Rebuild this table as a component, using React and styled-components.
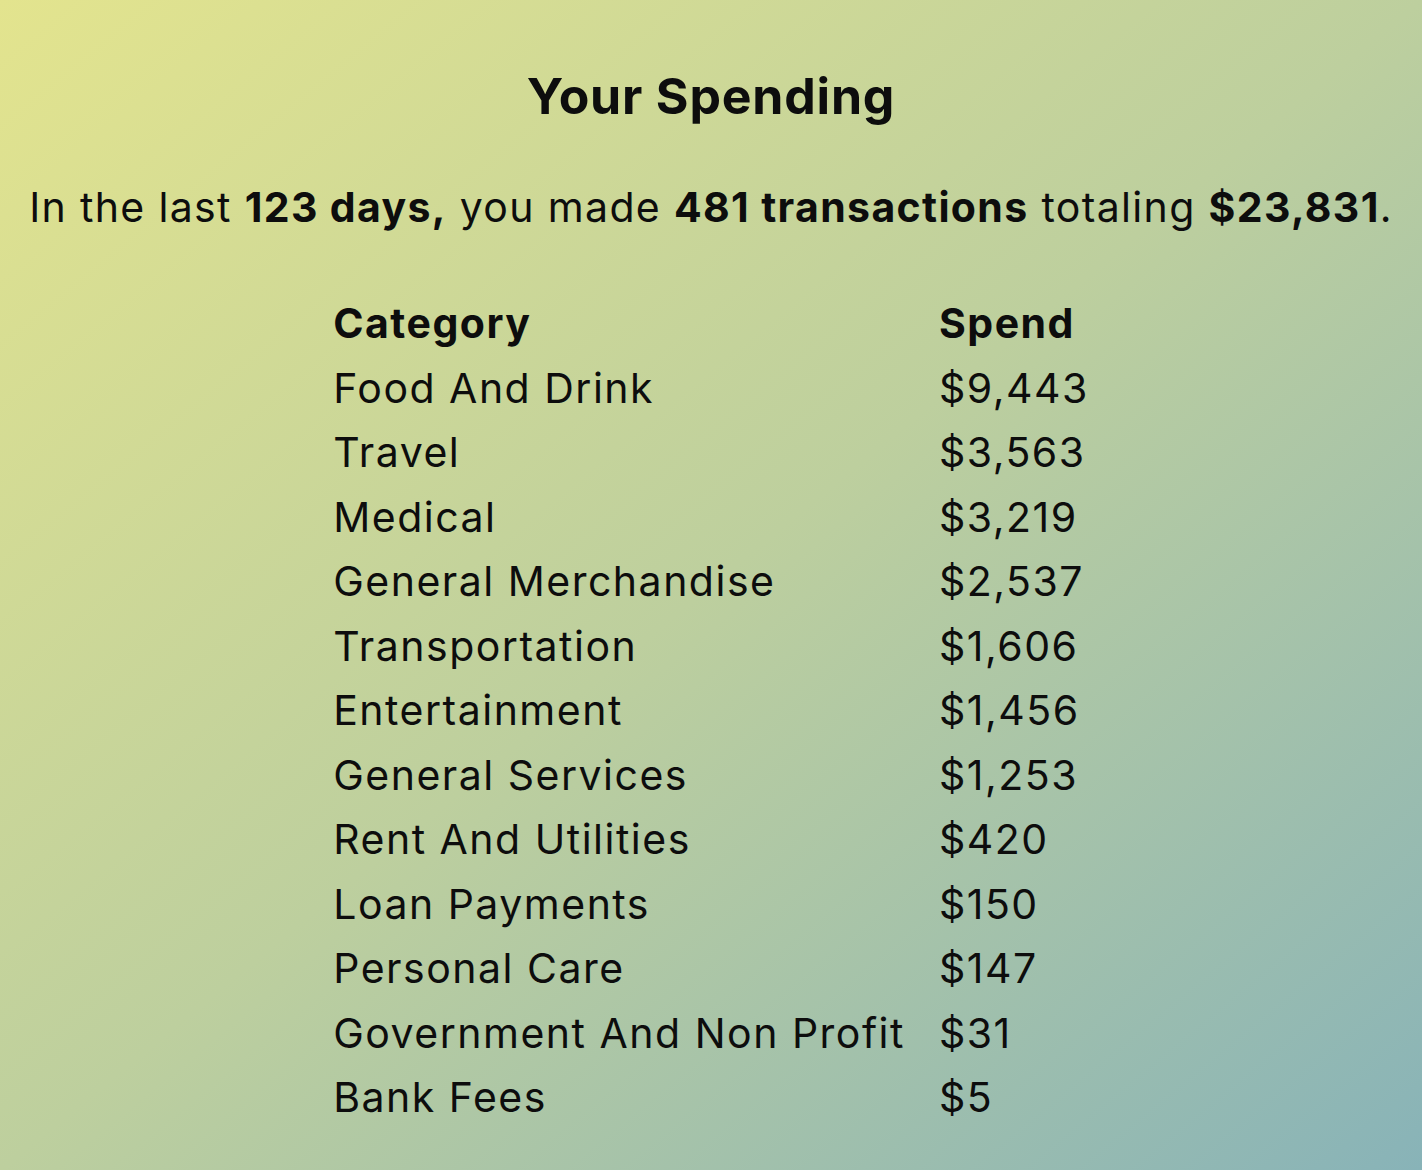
import styled, { createGlobalStyle } from 'styled-components';

const GlobalStyle = createGlobalStyle`
    html, body {
        margin: 0;
        padding: 0;
    }
    body {
        font-family: Inter, 'Noto Sans', sans-serif;
        color: #0d0d0d;
    }
`;

const Page = styled.main`
    min-height: 100vh;
    box-sizing: border-box;
    padding-top: 66px;
    display: flex;
    flex-direction: column;
    align-items: center;
    background: linear-gradient(to bottom right, #e3e48e 0%, #bdcf9e 50%, #88b3b8 100%);
`;

const Title = styled.h1`
    margin: 0;
    font-size: 50px;
    line-height: 1.2;
    font-weight: 700;
    letter-spacing: 0.8px;
`;

const Summary = styled.p`
    margin: 57px 0 0;
    font-size: 41px;
    line-height: 1.2;
    font-weight: 400;
    letter-spacing: 1.35px;
    white-space: nowrap;

    b {
        font-weight: 700;
    }
`;

const Table = styled.table`
    margin-top: 59px;
    border-collapse: collapse;
    font-size: 41px;
    letter-spacing: 1.5px;
`;

const Cell = styled.td`
    padding: 0 ${(p) => (p.$first ? '34px' : '0')} 0 0;
    height: 64.5px;
    text-align: left;
    font-weight: ${(p) => (p.$head ? 700 : 400)};
    white-space: nowrap;
`;

const rows = [
    ['Food And Drink', '$9,443'],
    ['Travel', '$3,563'],
    ['Medical', '$3,219'],
    ['General Merchandise', '$2,537'],
    ['Transportation', '$1,606'],
    ['Entertainment', '$1,456'],
    ['General Services', '$1,253'],
    ['Rent And Utilities', '$420'],
    ['Loan Payments', '$150'],
    ['Personal Care', '$147'],
    ['Government And Non Profit', '$31'],
    ['Bank Fees', '$5'],
];

export default function App() {
    return (
        <Page>
            <GlobalStyle />
            <Title>Your Spending</Title>
            <Summary>
                In the last <b>123 days,</b> you made <b>481 transactions</b>{' '}
                totaling <b>$23,831</b>.
            </Summary>
            <Table>
                <thead>
                    <tr>
                        <Cell as="th" $head $first>
                            Category
                        </Cell>
                        <Cell as="th" $head>
                            Spend
                        </Cell>
                    </tr>
                </thead>
                <tbody>
                    {rows.map(([name, amount]) => (
                        <tr key={name}>
                            <Cell $first>{name}</Cell>
                            <Cell>{amount}</Cell>
                        </tr>
                    ))}
                </tbody>
            </Table>
        </Page>
    );
}
